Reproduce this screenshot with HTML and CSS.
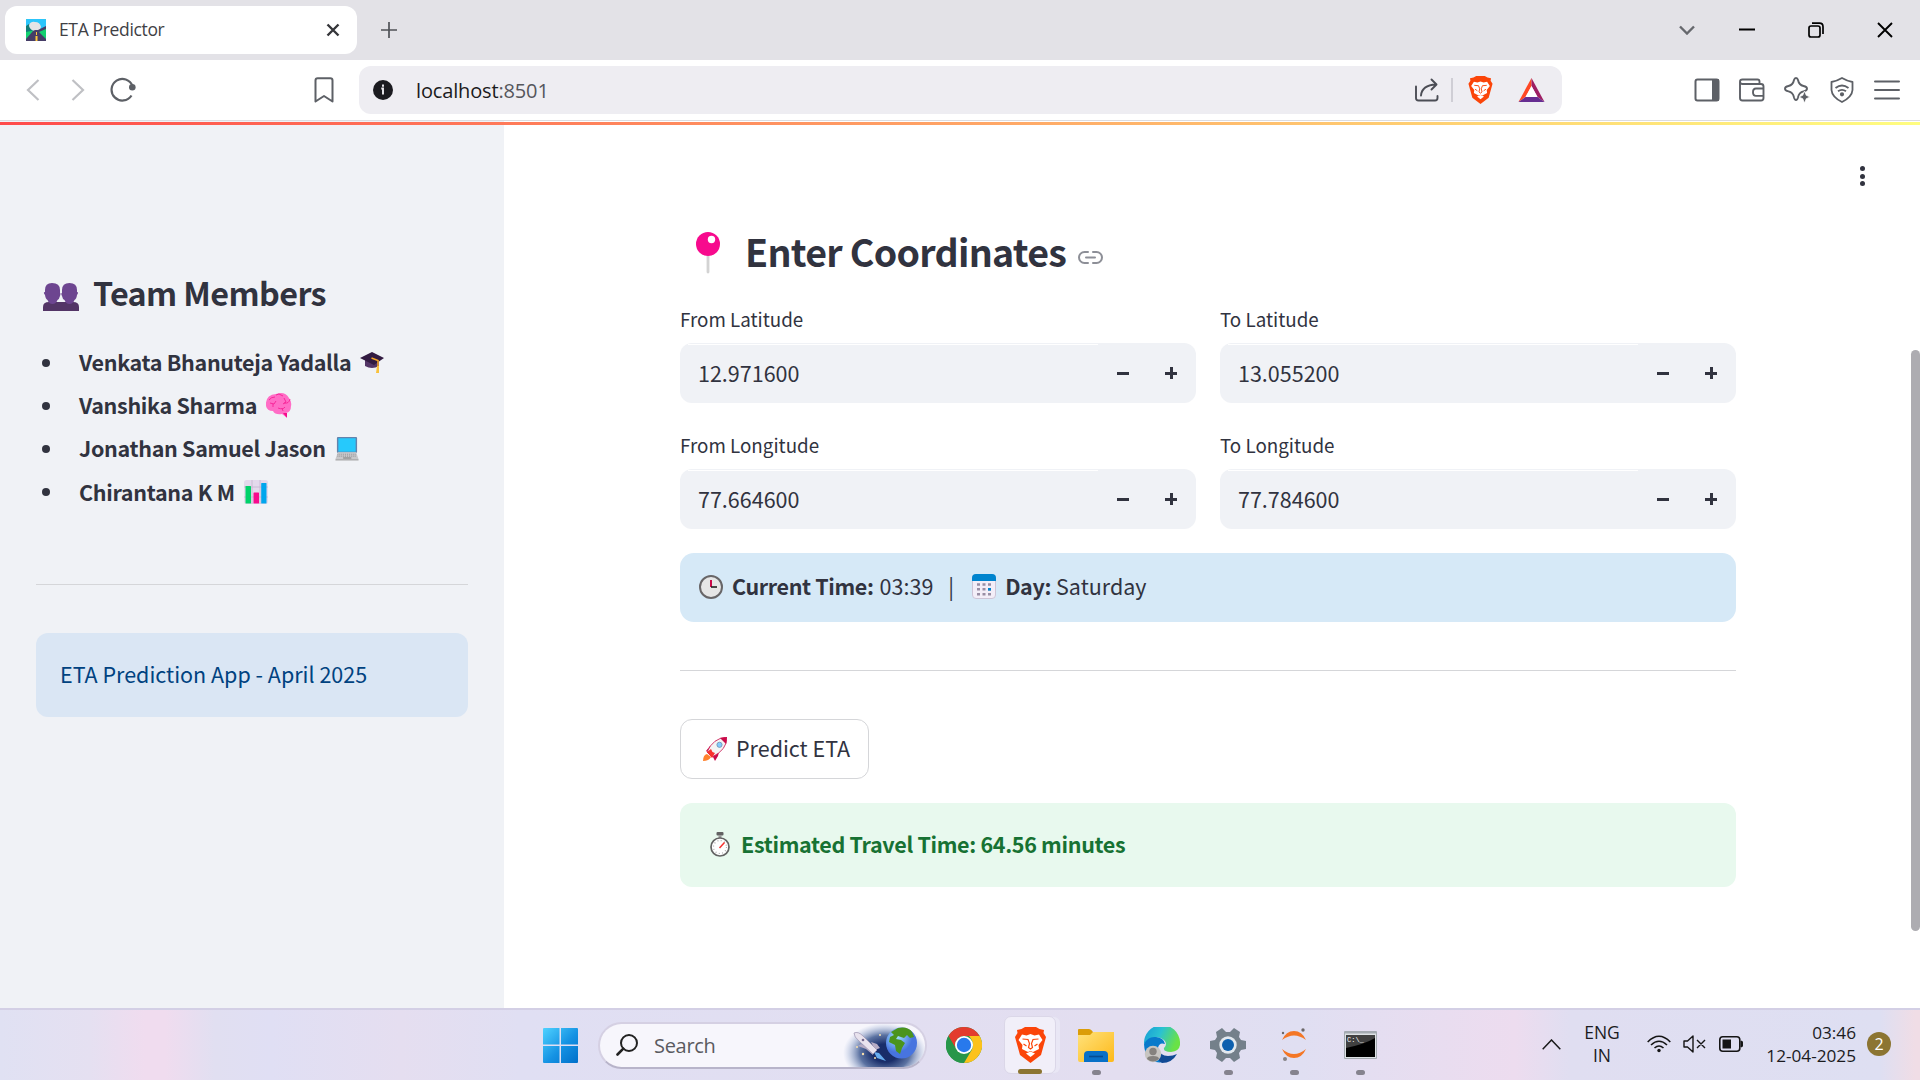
FILE: index.html
```html
<!DOCTYPE html>
<html lang="en">
<head>
<meta charset="utf-8">
<title>ETA Predictor</title>
<link rel="stylesheet" href="styles.css">
</head>
<body>
<div class="screen">
  <header class="tabstrip">
    <div class="tab">
      <svg class="favicon" viewBox="0 0 20 22"><rect width="20" height="22" rx="1" fill="#14d070"/><path d="M0 1q0-1 1-1h18q1 0 1 1v7L10 13 0 8z" fill="#2cc5fb"/><path d="M0 7l3-2 4 0 3 6-10 2z" fill="#117c78"/><path d="M3 6q2-4 6-3 5 0 6 5l-2 4H8Q3 10 3 6z" fill="#e4e4e6"/><path d="M9 11h3l8-4v3l-7 3 7 7v2H0v-2l7-8z" fill="#463d67"/><path d="M10 13h1v3h-1zM9.500 17h2v5h-2z" fill="#ffc83d"/></svg>
      <span class="tab-title">ETA Predictor</span>
      <svg class="tab-close" viewBox="0 0 14 14"><path d="M1.500 1.500l11 11m0-11l-11 11" stroke="#35363a" stroke-width="2.400"/></svg>
    </div>
    <svg class="tab-new" viewBox="0 0 18 18"><path d="M9 1v16M1 9h16" stroke="#505257" stroke-width="1.700"/></svg>
    <div class="window-buttons">
      <svg class="w-chev" viewBox="0 0 16 10"><path d="M1 1.500l7 7 7-7" fill="none" stroke="#66686d" stroke-width="2.400"/></svg>
      <svg class="w-min" viewBox="0 0 16 4"><path d="M0 1.500h16" stroke="#000" stroke-width="2"/></svg>
      <svg class="w-max" viewBox="0 0 16 16" fill="none" stroke="#000" stroke-width="1.700"><rect x="1" y="4" width="11" height="11" rx="2"/><path d="M4 1.200h7.500q3.500 0 3.500 3.500V12"/></svg>
      <svg class="w-close" viewBox="0 0 16 16"><path d="M1 1l14 14m0-14L1 15" stroke="#000" stroke-width="1.900"/></svg>
    </div>
  </header>
  <nav class="toolbar">
    <svg class="nav-icon back" viewBox="0 0 14 24"><path d="M12.500 2L2 12l10.500 10" /></svg>
    <svg class="nav-icon forward" viewBox="0 0 14 24"><path d="M1.500 2L12 12 1.500 22"/></svg>
    <svg class="reload" viewBox="0 0 26 26"><path d="M21.500 18.500A10.800 10.800 0 1 1 22.500 9" fill="none" stroke="#5d6066" stroke-width="2.200"/><circle cx="22.300" cy="10.300" r="3.300" fill="#5d6066"/></svg>
    <svg class="bookmark" viewBox="0 0 20 26"><path d="M1.500 3.500q0-2.200 2.200-2.200h12.600q2.200 0 2.200 2.200V24.500l-8.500-5.500-8.500 5.500z" fill="none" stroke="#5d6066" stroke-width="2" stroke-linejoin="round"/></svg>
    <div class="address">
      <svg class="info" viewBox="0 0 20 20"><circle cx="10" cy="10" r="10" fill="#1b1b20"/><path d="M10 4.500v2.200M8.300 8.500H10V14.500" stroke="#eeedf2" stroke-width="1.900" fill="none"/></svg>
      <span class="url">localhost<span class="port">:8501</span></span>
      <svg class="share" viewBox="0 0 24 24" fill="none" stroke="#4b4d55" stroke-width="1.900" stroke-linecap="round" stroke-linejoin="round"><path d="M1 8.500V20q0 2.500 2.500 2.500H20q2.500 0 2.500-2.500v-2"/><path d="M6 17.500Q7 7 21 6.500M16.500 1.500l5 5-5 5"/></svg>
      <span class="addr-sep"></span>
      <svg class="shield" viewBox="0 0 31 36"><use href="#lion"/></svg>
      <svg class="bat" viewBox="0 0 26 24"><path d="M13 0L0 24l7-5 6-11z" fill="#ff4724"/><path d="M13 0l13 24-7-5-6-11z" fill="#9e1f63"/><path d="M13 8l6 11H7z" fill="#fff"/><path d="M0 24l7-5h12l7 5z" fill="#662d91"/></svg>
    </div>
    <div class="tools">
      <svg viewBox="0 0 26 26" class="t1"><rect x="1.500" y="2.500" width="23" height="21" rx="2" fill="none" stroke="#5d6066" stroke-width="2"/><path d="M18 2h6q1 0 1 1v20q0 1-1 1h-6z" fill="#5d6066"/></svg>
      <svg viewBox="0 0 26 26" class="t2" fill="none" stroke="#5d6066" stroke-width="1.900" stroke-linejoin="round"><path d="M1 5v16q0 2.500 2.500 2.500h18.500q2.500 0 2.500-2.500V9.500q0-2.500-2.500-2.500H3.500Q1 7 1 4.500 1 2.500 3.500 2.500h15q2 0 2 2V7M24.500 11.500H17q-3 0-3 3.700t3 3.700h7.500"/></svg>
      <svg viewBox="0 0 26 26" class="t3"><path d="M12 1q1.500 0 2 2 1 5 5.500 6 3.500.7 3.500 2.700t-3.500 2.700q-4.500 1-5.500 6-.6 2.600-2 2.600t-2-2.600q-1-5-5.500-6Q1 13.700 1 11.700T4.500 9Q9 8 10 3q.5-2 2-2z" fill="none" stroke="#5d6066" stroke-width="1.900"/><path d="M20.500 14l1.700 4.300L26 20l-3.800 1.700L20.500 26l-1.700-4.300L15 20l3.800-1.700z" fill="#5d6066" stroke="#fff" stroke-width=".7"/></svg>
      <svg viewBox="0 0 24 26" class="t4" fill="none" stroke="#5d6066" stroke-width="1.800"><path d="M12 1q5 3 10.500 4v8Q22 20 12 25 2 20 1.500 13V5Q7 4 12 1z" stroke-linejoin="round"/><path d="M5.500 11q6.500-5 13 0M8 14.300q4-3 8 0"/><circle cx="12" cy="17.300" r="1.200" fill="#5d6066"/></svg>
      <svg viewBox="0 0 26 20" class="t5" stroke="#5d6066" stroke-width="2" stroke-linecap="round"><path d="M1 1.500h24M1 10h24M1 18.500h24"/></svg>
    </div>
  </nav>
  <main class="page">
    <div class="rainbow"></div>
    <aside class="sidebar">
      <h2 class="team"><svg viewBox="0 0 36 28"><path d="M0 28v-4q0-5 6-5h24q6 0 6 5v4z" fill="#533566"/><path d="M9 0Q17 0 17 7v3q1 0 0 3-.7 3-2.500 4-1.500 4-5 4t-5-4Q2.500 16 2 12-.3 9 2 9V7Q2 0 9 0z" fill="#6d4590"/><path d="M26.500 0Q34 0 34 7v2q2 0 0 3-.5 4-2.500 5-1.500 4-5 4t-5-4Q19.500 16 19 13q-1.500-3 0-3V7q0-7 7.500-7z" fill="#6d4590"/></svg><span>Team Members</span></h2>
      <ul class="members">
        <li><span>Venkata Bhanuteja Yadalla</span><svg viewBox="0 0 24 22"><path d="M5 8h14v6q-7 4-14 0z" fill="#533566"/><path d="M0 6l12-6 12 6-10 7z" fill="#321b41"/><path d="M11.500 6L18 8.500V20" stroke="#f9a825" stroke-width="1.500" fill="none"/><path d="M17 14h2v7h-3z" fill="#f9c23c"/></svg></li>
        <li><span>Vanshika Sharma</span><svg viewBox="0 0 26 25" class="brain"><path d="M10 1q9-3 13 4 3 4 2 8 0 6-5 7v4l-4-3q-7 1-9-3-6 0-7-5Q-1 2 10 1z" fill="#ff6dc6"/><path d="M17 20h4v5z" fill="#f70a8d"/><path d="M10 2l3-1 4 2M3 7q2-3 6-3M4 10l4 1 2-3M7 11v3M12 15q5 2 7-1M16 15l1 3M18 10q5 1 6-4M18 5l2 4-3 2" fill="none" stroke="#f72095" stroke-width=".9"/></svg></li>
        <li><span>Jonathan Samuel Jason</span><svg viewBox="0 0 24 25"><rect x="1.500" width="21" height="16.500" rx="1" fill="#6383ad"/><rect x="3" y="1.300" width="18" height="14" fill="#26c9fc"/><path d="M2.500 16h19l2.500 7H0z" fill="#c8c8ca"/><path d="M2 18h20M2 20h20" stroke="#97979b" stroke-width="1.200" stroke-dasharray="1 1"/><rect x="8" y="21" width="8.500" height="1.700" fill="#999"/><path d="M0 23h24v1.500H0z" fill="#aaa"/></svg></li>
        <li><span>Chirantana K M</span><svg viewBox="0 0 24 24"><rect width="24" height="24" rx="2.500" fill="#e3d9ec"/><path d="M8 0v24M16 0v24M0 7h24M0 17h24" stroke="#c4b4d0" stroke-width=".8"/><rect x="1.500" y="6" width="5.500" height="17.500" rx=".6" fill="#00d26a"/><rect x="9.500" y="12.500" width="5.500" height="11" rx=".6" fill="#f70a8d"/><rect x="17.200" y="3" width="5.300" height="20.500" rx=".6" fill="#00a6ed"/></svg></li>
      </ul>
      <hr class="side-rule">
      <div class="side-info"><span>ETA Prediction App - April 2025</span></div>
    </aside>
    <section class="content">
      <h1 class="heading"><svg class="pin" viewBox="0 0 24 42"><path d="M12 22v18" stroke="#d3d3d3" stroke-width="2.800" stroke-linecap="round"/><circle cx="12" cy="12" r="12" fill="#f70a8d"/><circle cx="15.500" cy="7.500" r="3.700" fill="#fff"/></svg><span>Enter Coordinates</span><svg class="link" viewBox="0 0 25 13" fill="none" stroke="#8d8f97" stroke-width="2" stroke-linecap="round"><path d="M10 1H6.500a5.500 5.500 0 0 0 0 11H10M15 1h3.500a5.500 5.500 0 0 1 0 11H15M8 6.500h9"/></svg></h1>
      <div class="grid">
        <div class="field"><label>From Latitude</label><div class="input"><span>12.971600</span><i class="minus"></i><i class="plus"></i></div></div>
        <div class="field"><label>To Latitude</label><div class="input"><span>13.055200</span><i class="minus"></i><i class="plus"></i></div></div>
        <div class="field"><label>From Longitude</label><div class="input"><span>77.664600</span><i class="minus"></i><i class="plus"></i></div></div>
        <div class="field"><label>To Longitude</label><div class="input"><span>77.784600</span><i class="minus"></i><i class="plus"></i></div></div>
      </div>
      <div class="time-box">
        <svg class="clock" viewBox="0 0 24 24"><circle cx="12" cy="12" r="11" fill="#e6e6e6" stroke="#686668" stroke-width="2"/><path d="M12 5v7" stroke="#ca0b4a" stroke-width="2"/><path d="M12 12h6" stroke="#222" stroke-width="1.600"/></svg>
        <b class="ct">Current Time:</b><span class="hhmm">03:39</span><span class="bar">|</span>
        <svg class="cal" viewBox="0 0 24 25"><rect x=".5" y=".5" width="23" height="24" rx="3.500" fill="#f3eef8" stroke="#cdc4d6"/><path d="M0 7V4q0-4 4-4h16q4 0 4 4v3z" fill="#0084ce"/><path d="M5 10.500h14M5 15.300h14M5 20.200h14" stroke="#998ea4" stroke-width="2.600" stroke-dasharray="3 2.500"/><path d="M16 14h3v2.600h-3z" fill="#0084ce"/></svg>
        <b class="dy">Day:</b><span class="sat">Saturday</span>
      </div>
      <hr class="rule">
      <button class="predict"><svg viewBox="0 0 24 24"><path d="M0 24q0-6 4-7l4 3q-2 4-8 4z" fill="#ff822d"/><path d="M3 14l4-5h4l5 6-1 4-3 5-2-4-5-5z" fill="#ca0b4a"/><path d="M9 20L4 15q6-14 20-15 0 13-15 20z" fill="#f4f4f4" stroke="#ca0b4a" stroke-width=".8"/><path d="M17 1l7-1-1 7z" fill="#ca0b4a"/><circle cx="16.500" cy="7.800" r="2.600" fill="#83cbff" stroke="#6f91ad" stroke-width=".8"/><path d="M4 15l4-3 1.500 3 2.500 1-3 5z" fill="#f8312f"/></svg><span>Predict ETA</span></button>
      <div class="result"><svg viewBox="0 0 20 25"><rect x="6.500" y="0" width="7" height="3.500" rx="1" fill="#636363"/><path d="M10 3v3" stroke="#999" stroke-width="3"/><circle cx="10" cy="15" r="9" fill="#fff" stroke="#636363" stroke-width="1.700"/><circle cx="10" cy="15" r="6.500" fill="none" stroke="#aaa" stroke-width="1.200" stroke-dasharray="1 2.400"/><path d="M9.500 16l5-5.500" stroke="#f8312f" stroke-width="1.500"/></svg><b>Estimated Travel Time: 64.56 minutes</b></div>
    </section>
    <div class="kebab"><i></i><i></i><i></i></div>
    <div class="scrollbar"></div>
  </main>
  <footer class="taskbar">
    <div class="apps">
      <svg class="start" viewBox="0 0 35 35"><defs><linearGradient id="win" gradientUnits="userSpaceOnUse" x1="0" y1="0" x2="35" y2="35"><stop offset="0" stop-color="#4fd2ff"/><stop offset=".55" stop-color="#1592e3"/><stop offset="1" stop-color="#006fc9"/></linearGradient></defs><path d="M1 0h15.500v16.500H0V1q0-1 1-1zM18 0h16q1 0 1 1v15.500H18zM0 18h16.500v17H1q-1 0-1-1zM18 18h17v16q0 1-1 1H18z" fill="url(#win)"/></svg>
      <div class="search">
        <svg class="glass" viewBox="0 0 22 22"><circle cx="13" cy="9" r="8" fill="none" stroke="#222" stroke-width="2"/><path d="M7.300 14.700L1.500 20.500" stroke="#222" stroke-width="2.600" stroke-linecap="round"/></svg>
        <span>Search</span>
        <svg class="space" viewBox="0 0 84 44"><defs><radialGradient id="sp"><stop offset=".3" stop-color="#192d69"/><stop offset=".6" stop-color="#405b91" stop-opacity=".85"/><stop offset="1" stop-color="#9bb1d9" stop-opacity="0"/></radialGradient><radialGradient id="globe" cx=".35" cy=".3"><stop offset="0" stop-color="#a4e4ff"/><stop offset="1" stop-color="#4774df"/></radialGradient></defs><ellipse cx="42" cy="30" rx="42" ry="30" fill="url(#sp)"/><path d="M31 29l5 1 7 8-9-3z" fill="#67adf0"/><path d="M18 21l-3 2 8 3 7 6 1-5zM28 19l6 2 3 4-5 2z" fill="#b5abc4"/><path d="M11 10q4-2 9 3l14 14-4 4-14-13q-5-4-5-8z" fill="#e9e3ee" stroke="#a39ab6" stroke-width=".8"/><circle cx="20" cy="17" r="1.300" fill="#74698d"/><circle cx="58.500" cy="20" r="15.500" fill="url(#globe)"/><path d="M48 9l7-4q10-2 14 4l2 5-4 1-3-3-3 3-6-2-2 3 5 1 4 3-3 5-2 6-4-3-1-6-6-3 1-5 4-2z" fill="#4b941d"/><g fill="#f7dfac"><circle cx="37" cy="12" r="1"/><circle cx="14" cy="24" r="1"/><circle cx="20" cy="31" r="1.200"/><circle cx="32" cy="35" r="1"/></g></svg>
      </div>
      <div class="app"><svg viewBox="0 0 36 36"><circle cx="18" cy="18" r="18" fill="#27964a"/><path d="M2.400 9A18 18 0 0 1 33.600 9H18a9 9 0 0 0-8 13z" fill="#e33b2e"/><path d="M2.400 9L10 22l8 5 8-4.500L18 36A18 18 0 0 1 2.400 9z" fill="#27964a"/><path d="M33.600 9A18 18 0 0 1 18 36l8-13.500Q29 16 23 9z" fill="#fcc21b"/><circle cx="18" cy="18" r="9" fill="#fff"/><circle cx="18" cy="18" r="7.200" fill="#2879ec"/></svg></div>
      <div class="app active"><svg class="lion" viewBox="0 0 31 36"><g id="lion"><path d="M10 0h11l3.500 2 4.500 1-.5 3L31 10l-5 18-10.500 8L5 28 0 10l2.500-4L2 3l4.500-1z" fill="#fb4509"/><path d="M7 7.500l4.500 1L15.500 7l4 1.500 4.500-1 3.500 5.500-4 5 .5 4-6 3-2.500-1-2.500 1-6-3 .5-4-4-5z" fill="#fff"/><path d="M7.500 12l5.500.5 1.500 4-1 4 2 1.500 2-1.500-1-4 1.500-4 5.500-.5M8.500 17l3 2M22.500 17l-3 2" fill="none" stroke="#fb4509" stroke-width="1.200"/><path d="M11 26.500l4.500-2 4.500 2-4.500 3.500z" fill="#fff"/></g></svg><i class="dot"></i></div>
      <div class="app"><svg class="folder" viewBox="0 0 36 33"><defs><linearGradient id="fold" x2="1" y2="1"><stop stop-color="#ffe27c"/><stop offset="1" stop-color="#fdb919"/></linearGradient></defs><path d="M0 1q0-1 1-1h10q2 0 4 3h20q1 0 1 1v7H0z" fill="#db9d09"/><path d="M0 6h12l3-3h21v28q0 2-2 2H2q-2 0-2-2z" fill="url(#fold)"/><path d="M6 33v-7q0-4 4-4h16q4 0 4 4v7z" fill="#0870c7"/><path d="M11 27.500h14" stroke="#064c91" stroke-width="1.600"/></svg><i class="dot"></i></div>
      <div class="app"><svg viewBox="0 0 36 36"><defs><linearGradient id="ed" x2="1" y2=".35"><stop stop-color="#159bd7"/><stop offset=".5" stop-color="#2bc2d1"/><stop offset="1" stop-color="#69e246"/></linearGradient></defs><path d="M0 17A18 18 0 0 1 36 15q1 9-9 10-8 0-7-4 4-4 0-8Q12 6 0 17z" fill="url(#ed)"/><path d="M0 17q4-8 12-7 8 1 9 7-6-2-7 4-1 8 6 14Q1 38 0 17z" fill="#087acb"/><path d="M14 21q2 8 10 8 5 0 9-2-5 9-15 9Q11 32 14 21z" fill="#114a95"/><circle cx="9" cy="27" r="8.200" fill="#c7c5c1"/><circle cx="9" cy="24.500" r="3.700" fill="#85827e"/><path d="M3 32q0-3 6-3t6 3q-6 5-12 0z" fill="#85827e"/></svg></div>
      <div class="app"><svg viewBox="0 0 36 36"><path d="M12 1l4 4h4l4-4 6 4-1 5 2 3 5 1v8l-5 1-2 3 1 5-6 4-4-4h-4l-4 4-6-4 1-5-2-3-5-1v-8l5-1 2-3-1-5z" fill="#74808a"/><circle cx="18" cy="18" r="8.700" fill="#e2e8ee"/><circle cx="18" cy="18" r="6" fill="#0d60ae"/></svg><i class="dot"></i></div>
      <div class="app"><svg viewBox="0 0 36 36"><path d="M6 13q4-9 12-9t12 9q-12-9-24 0zM6 22q12 10 24 0-4 9-12 9T6 22z" fill="#f47726"/><circle cx="27" cy="3" r="1.700" fill="#6b6768"/><circle cx="7" cy="6" r="1.200" fill="#6b6768"/><circle cx="9" cy="32" r="2" fill="#858386"/></svg><i class="dot"></i></div>
      <div class="app"><svg class="cmd" viewBox="0 0 33 28"><rect width="33" height="28" rx="1" fill="#a4aab1"/><path d="M1 2.500h31V27H1z" fill="#dee2e5"/><path d="M2 4h29v22H2z" fill="#000"/><path d="M2 4h29v3Q21 13 2 17z" fill="#414141"/><text x="3" y="11" class="cmd-text">C:\_</text></svg><i class="dot"></i></div>
    </div>
    <div class="tray">
      <svg class="up" viewBox="0 0 19 11"><path d="M.7 10.300L9.500 1l8.800 9.300" fill="none" stroke="#1a1a1a" stroke-width="1.500"/></svg>
      <div class="lang"><span>ENG</span><span>IN</span></div>
      <svg class="wifi" viewBox="0 0 24 18" fill="none" stroke="#151515" stroke-width="1.600"><path d="M.7 7Q12-4.500 23.300 7M4 10q8-7.500 16 0M7.500 13q4.500-4 9 0"/><circle cx="12" cy="15.500" r="1.700" fill="#151515" stroke="none"/></svg>
      <svg class="mute" viewBox="0 0 23 18" fill="none" stroke="#151515" stroke-width="1.400" stroke-linejoin="round"><path d="M1 6h3.500L10 1v16l-5.500-5H1zM14 5l8 8m0-8l-8 8"/></svg>
      <svg class="battery" viewBox="0 0 24 16"><rect x=".8" y=".8" width="20" height="14.400" rx="3" fill="none" stroke="#151515" stroke-width="1.600"/><rect x="3.500" y="3.500" width="8.500" height="9" fill="#151515"/><path d="M22 5q2 0 2 3t-2 3z" fill="#151515" stroke="#151515"/></svg>
      <div class="datetime"><span>03:46</span><span>12-04-2025</span></div>
      <span class="badge">2</span>
    </div>
  </footer>
</div>
</body>
</html>
```
FILE: styles.css
```css
* { box-sizing: border-box; }
body { margin: 0; background: #fff; }
svg { display: block; flex: none; }
span, b, label { white-space: nowrap; }
.screen { width: 1920px; height: 1080px; overflow: hidden; display: flex; flex-direction: column; font-family: "Noto Sans CJK SC", "Noto Sans", sans-serif; color: #31333f; }
.tabstrip, .toolbar, .taskbar { font-family: "Open Sans", "Noto Sans", sans-serif; }

.tabstrip { height: 60px; background: #e3e2e7; display: flex; align-items: center; padding-left: 5px; flex: none; }
.tab { width: 352px; height: 48px; background: #fff; border-radius: 12px; display: flex; align-items: center; padding: 0 17px 0 21px; }
.favicon { width: 20px; height: 22px; }
.tab-title { font-size: 17.500px; color: #3f4145; margin-left: 13px; padding-bottom: 2px; letter-spacing: -.35px; }
.tab-close { width: 14px; height: 14px; margin-left: auto; }
.tab-new { width: 18px; height: 18px; margin-left: 23px; }
.window-buttons { display: flex; align-items: center; margin-left: auto; padding-right: 27px; }
.w-chev { width: 16px; height: 10px; margin-right: 44px; }
.w-min { width: 16px; height: 4px; margin-right: 53px; }
.w-max { width: 16px; height: 16px; margin-right: 53px; }
.w-close { width: 16px; height: 16px; }

.toolbar { height: 61px; border-bottom: 1px solid #dcdce0; background: #fff; display: flex; align-items: center; flex: none; padding-left: 26px; }
.nav-icon { width: 14px; height: 24px; fill: none; stroke: #bfc0c4; stroke-width: 2.200; }
.forward { margin-left: 31px; }
.reload { width: 26px; height: 26px; margin-left: 25px; }
.bookmark { width: 20px; height: 26px; margin-left: 178px; }
.address { width: 1203px; height: 48px; background: #eeedf2; border-radius: 12px; margin-left: 25px; display: flex; align-items: center; padding: 0 17px 0 14px; }
.info { width: 20px; height: 20px; }
.url { font-size: 20px; margin-left: 23px; color: #1b1b20; letter-spacing: -.15px; }
.port { color: #55565c; }
.share { width: 24px; height: 24px; margin-left: auto; }
.addr-sep { width: 2px; height: 24px; background: #cfced5; margin: 0 15px 0 12px; }
.shield { width: 25px; height: 28px; }
.bat { width: 27px; height: 24px; margin-left: 25px; }
.tools { display: flex; align-items: center; margin-left: auto; padding-right: 20px; }
.tools svg { width: 26px; height: 26px; }
.tools .t2, .tools .t3 { margin-left: 19px; }
.tools .t4 { width: 24px; margin-left: 20px; }
.tools .t5 { height: 20px; margin-left: 20px; }

.page { position: relative; flex: 1; display: flex; background: #fff; min-height: 0; }
.rainbow { position: absolute; left: 0; right: 0; top: 1px; height: 3px; background: linear-gradient(90deg, #ff4b4b, #fffd80); }
.sidebar { width: 504px; background: #f0f2f6; padding: 150px 36px 0; flex: none; }
.team { margin: 0; height: 46px; font-size: 32.300px; font-weight: 700; letter-spacing: -.6px; display: flex; align-items: center; padding-left: 7px; }
.team svg { width: 36px; height: 28px; margin-right: 14px; margin-top: 6px; }
.team span { padding-bottom: 4px; }
.members { list-style: none; margin: 24px 0 0; padding: 0; font-size: 21.500px; font-weight: 700; letter-spacing: -.32px; }
.members li { height: 43.200px; display: flex; align-items: center; }
.members li::before { content: ""; width: 8px; height: 8px; border-radius: 50%; background: #31333f; margin: 0 29px 0 6px; }
.members span { padding-bottom: 2px; }
.members svg { width: 24px; height: 24px; margin-left: 9px; }
.members .brain { width: 26px; height: 25px; }
hr { border: 0; height: 1px; background: #d5d6d9; margin: 0; }
.side-rule { margin-top: 70px; }
.side-info { margin-top: 48px; height: 84px; border-radius: 12px; background: #dae6f4; color: #004280; font-size: 21.500px; padding: 0 0 2px 24px; display: flex; align-items: center; }

.content { padding: 100px 0 0 176px; width: 1232px; }
.heading { margin: 0; height: 62px; display: flex; align-items: center; font-size: 37.600px; font-weight: 700; letter-spacing: -.72px; }
.heading span { padding-bottom: 3px; }
.pin { width: 24px; height: 42px; margin: 1px 25px 0 16px; }
.link { width: 25px; height: 13px; margin: 10px 0 0 12px; }
.grid { display: grid; grid-template-columns: 516px 516px; column-gap: 24px; row-gap: 24px; margin-top: 18px; }
.field { height: 102px; }
.field label { display: block; font-size: 18.800px; height: 42px; line-height: 35px; }
.input { height: 60px; background: #f0f2f6; border-radius: 12px; display: flex; align-items: center; padding: 0 19px 0 18px; background-image: linear-gradient(#fff, #fff); background-size: 410px 1px; background-position: 8px 1px; background-repeat: no-repeat; }
.input span { font-size: 21.500px; margin-right: auto; padding-bottom: 2px; }
.minus, .plus { width: 12px; height: 12px; background: linear-gradient(#31333f, #31333f) center / 12px 3px no-repeat; margin-right: 36px; }
.plus { margin-right: 0; background: linear-gradient(#31333f, #31333f) center / 12px 3px no-repeat, linear-gradient(#31333f, #31333f) center / 3px 12px no-repeat; }
.time-box { margin-top: 24px; height: 69px; border-radius: 14px; background: #d6e9f7; display: flex; align-items: center; padding: 0 0 2px 19px; font-size: 21.500px; }
.time-box span, .time-box b { padding-bottom: 3px; }
.clock { width: 24px; height: 24px; }
.ct { margin-left: 9px; letter-spacing: -.37px; }
.hhmm { margin-left: 6px; }
.bar { margin: 0 18px 0 15px; }
.cal { width: 24px; height: 25px; }
.dy { margin-left: 9px; letter-spacing: -.37px; }
.sat { margin-left: 5px; }
.rule { margin-top: 48px; }
.predict { display: flex; align-items: center; margin: 48px 0 0; width: 189px; height: 60px; background: #fff; border: 1px solid #d5d6d9; border-radius: 12px; font: 21.500px "Noto Sans CJK SC", sans-serif; color: #31333f; padding: 0 0 1px 22px; }
.predict span { padding-bottom: 2px; }
.predict svg { width: 24px; height: 24px; margin-right: 9px; }
.result { margin-top: 24px; height: 84px; border-radius: 12px; background: #e8f9ee; color: #177233; display: flex; align-items: center; padding: 0 0 1px 30px; font-size: 21.500px; letter-spacing: -.33px; }
.result b { padding-bottom: 3px; }
.result svg { width: 20px; height: 25px; margin-right: 11px; }
.kebab { position: absolute; left: 1860px; top: 45px; display: flex; flex-direction: column; gap: 2.500px; }
.kebab i { width: 5px; height: 5px; border-radius: 50%; background: #31333f; }
.scrollbar { position: absolute; right: 0; top: 229px; width: 9px; height: 581px; border-radius: 5px; background: #adacb1; }

.taskbar { height: 72px; flex: none; border-top: 2px solid #d3cfe5; display: flex; align-items: center; justify-content: space-between; padding: 0 29px 0 543px; background: linear-gradient(90deg, #e0e1f3 0, #e5e0f1 90px, #f0dcef 145px, #f0dcef 165px, #e1dff1 215px, #e0dff4 270px, #e5def0 400px, #e0dff3 520px, #e3def0 1120px, #e0dff2 1300px, #eddcef 1515px, #e0def1 1570px, #dedff2 1880px, #f0dde6 1915px); }
.apps { display: flex; align-items: center; }
.start { width: 35px; height: 35px; margin-right: 20px; }
.search { position: relative; width: 329px; height: 47px; border: 2px solid #d5d0e3; border-bottom-color: #b8b4ca; border-radius: 24px; background: #f7f6fc; display: flex; align-items: center; padding-left: 16px; overflow: hidden; margin-right: 4px; }
.glass { width: 22px; height: 22px; }
.search span { margin-left: 16px; font-size: 20px; color: #5a5a60; letter-spacing: -.3px; }
.space { width: 84px; height: 44px; margin: 0 -2px 0 auto; }
.app { position: relative; width: 66px; height: 58px; display: flex; align-items: center; justify-content: center; }
.app svg { width: 36px; height: 36px; }
.app .lion { width: 31px; }
.app .folder { height: 33px; }
.app .cmd { width: 33px; height: 28px; }
.cmd-text { font: 7px "Liberation Mono", monospace; fill: #fff; }
.active { width: 52px; margin: 0 7px; background: #f1eff9; border-radius: 7px; border: 1px solid #dbd7e8; box-shadow: 5px 0 0 -1px #e9e7f5; }
.dot { position: absolute; left: 50%; bottom: -1px; width: 9px; height: 5px; margin-left: -4.500px; border-radius: 3px; background: #85838e; }
.active .dot { width: 24px; margin-left: -12px; background: #8c7532; }
.tray { display: flex; align-items: center; color: #1b1b1e; padding-bottom: 2px; }
.up { width: 19px; height: 11px; margin-right: 23px; }
.lang { width: 36px; text-align: center; font-size: 17.500px; line-height: 23px; display: flex; flex-direction: column; }
.wifi { width: 24px; height: 18px; margin-left: 27px; }
.mute { width: 23px; height: 18px; margin-left: 12px; }
.battery { width: 24px; height: 16px; margin-left: 13px; }
.datetime { width: 93px; margin: 0 11px 0 20px; display: flex; flex-direction: column; align-items: flex-end; font-size: 17.200px; line-height: 23px; }
.badge { width: 24px; height: 24px; border-radius: 50%; background: #8c7532; color: #fff; font-size: 16px; line-height: 24px; text-align: center; }
```
